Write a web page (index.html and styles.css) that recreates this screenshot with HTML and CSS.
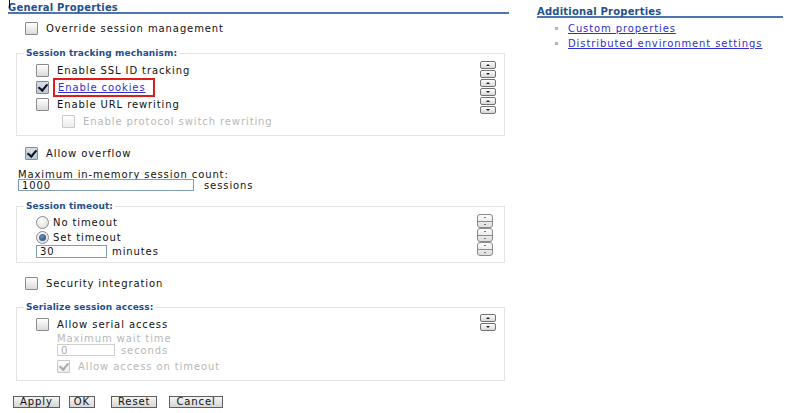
FILE: index.html
```html
<!DOCTYPE html>
<html lang="en">
<head>
    <meta charset="UTF-8">
    <title>Session management</title>
    <link rel="stylesheet" href="styles.css">
</head>
<body>
    <span class="cursor"></span>
    <div class="page">
        <div class="main">
            <h2 class="section-title">General Properties</h2>

            <div class="check-row top-row">
                <span class="cb"></span>
                <span>Override session management</span>
            </div>

            <fieldset class="group tracking">
                <legend>Session tracking mechanism:</legend>
                <div class="group-body">
                    <div class="options">
                        <div class="check-row"><span class="cb"></span><span>Enable SSL ID tracking</span></div>
                        <div class="check-row"><span class="cb checked"></span><span class="marked"><a href="#">Enable cookies</a></span></div>
                        <div class="check-row"><span class="cb"></span><span>Enable URL rewriting</span></div>
                        <div class="check-row sub disabled"><span class="cb"></span><span>Enable protocol switch rewriting</span></div>
                    </div>
                    <div class="spinners">
                        <span class="spin up"></span>
                        <span class="spin down"></span>
                        <span class="spin up"></span>
                        <span class="spin down"></span>
                        <span class="spin up"></span>
                        <span class="spin down"></span>
                    </div>
                </div>
            </fieldset>

            <div class="check-row overflow-row">
                <span class="cb checked"></span>
                <span>Allow overflow</span>
            </div>

            <label class="field-label" for="maxCount">Maximum in-memory session count:</label>
            <div class="input-row count-row">
                <input type="text" id="maxCount" class="count-input" value="1000">
                <span>sessions</span>
            </div>

            <fieldset class="group timeout">
                <legend>Session timeout:</legend>
                <div class="group-body">
                    <div class="options">
                        <div class="radio-row"><span class="rb"></span><span>No timeout</span></div>
                        <div class="radio-row"><span class="rb selected"></span><span>Set timeout</span></div>
                        <div class="input-row minutes-row">
                            <input type="text" class="minutes-input" value="30">
                            <span>minutes</span>
                        </div>
                    </div>
                    <div class="spinners pairs">
                        <span class="pair"><span class="half"></span><span class="half"></span></span>
                        <span class="pair"><span class="half"></span><span class="half"></span></span>
                        <span class="pair"><span class="half"></span><span class="half"></span></span>
                    </div>
                </div>
            </fieldset>

            <div class="check-row security-row">
                <span class="cb"></span>
                <span>Security integration</span>
            </div>

            <fieldset class="group serial">
                <legend>Serialize session access:</legend>
                <div class="group-body">
                    <div class="options">
                        <div class="check-row"><span class="cb"></span><span>Allow serial access</span></div>
                        <div class="wait disabled">
                            <div class="wait-label">Maximum wait time</div>
                            <div class="input-row">
                                <input type="text" class="wait-input" value="0" disabled>
                                <span>seconds</span>
                            </div>
                            <div class="check-row"><span class="cb checked"></span><span>Allow access on timeout</span></div>
                        </div>
                    </div>
                    <div class="spinners">
                        <span class="spin up"></span>
                        <span class="spin down"></span>
                    </div>
                </div>
            </fieldset>

            <div class="actions">
                <button>Apply</button>
                <button class="narrow">OK</button>
                <button class="reset">Reset</button>
                <button>Cancel</button>
            </div>
        </div>

        <div class="side">
            <h2 class="section-title">Additional Properties</h2>
            <ul class="links">
                <li><a href="#">Custom properties</a></li>
                <li><a href="#">Distributed environment settings</a></li>
            </ul>
        </div>
    </div>
</body>
</html>
```

FILE: styles.css
```css
body {
    margin: 0;
    font-family: 'DejaVu Sans', Verdana, sans-serif;
    font-size: 10px;
    letter-spacing: 0.9px;
    color: #111;
    background: white;
}
.cursor {
    position: absolute;
    left: 9px;
    top: 0;
    width: 1px;
    height: 8px;
    background: #000;
}
.page {
    display: flex;
    gap: 28px;
    padding-left: 8px;
}
.main {
    width: 501px;
}
.side {
    width: 246px;
}
.section-title {
    margin: 0;
    padding-top: 3px;
    font-size: 10px;
    line-height: 9px;
    letter-spacing: 0.2px;
    color: #26508e;
    border-bottom: 2px solid #4d76ae;
}
.side .section-title {
    padding-top: 8px;
    line-height: 8px;
}

/* rows */
.check-row, .radio-row {
    display: flex;
    align-items: center;
    height: 17px;
}
.cb {
    box-sizing: border-box;
    width: 13px;
    height: 13px;
    margin-right: 8px;
    border: 1px solid #8b8b8b;
    border-radius: 1px;
    background: linear-gradient(#ffffff, #dadada);
    position: relative;
}
.cb.checked {
    background: linear-gradient(#d6dfea, #b9c7d8);
}
.cb.checked::after {
    content: '';
    position: absolute;
    left: 3px;
    top: 0px;
    width: 4px;
    height: 7px;
    border: solid #111;
    border-width: 0 2px 2px 0;
    transform: rotate(40deg);
}
.disabled {
    color: #b8b8b8;
}
.disabled .cb {
    border-color: #c9c9c9;
    background: linear-gradient(#ffffff, #ececec);
}
.disabled .cb.checked::after {
    border-color: #a9a9a9;
}
.top-row {
    margin-top: 6px;
    padding-left: 17px;
}

/* fieldsets */
.group {
    margin: 0 4px 0 8px;
    padding: 0;
    border: 1px solid #e4e4e4;
}
.group legend {
    margin-left: 7px;
    padding: 0 2px;
    font-size: 9px;
    font-weight: bold;
    line-height: 12px;
    letter-spacing: 0.1px;
    color: #1f4f8c;
}
.group-body {
    display: flex;
    justify-content: space-between;
    align-items: flex-start;
}
.options {
    padding-left: 19px;
}
.tracking {
    margin-top: 10px;
}
.tracking .options {
    padding-top: 3px;
    padding-bottom: 5px;
}
.check-row.sub {
    padding-left: 26px;
}
.marked {
    padding: 0 5px 0 1px;
    outline: 2px solid #e01b1b;
    outline-offset: 2px;
}
a {
    color: #2f2fd0;
}

/* spinners */
.spinners {
    display: flex;
    flex-direction: column;
    gap: 1px;
    margin: 2px 8px 0 0;
}
.spin {
    box-sizing: border-box;
    width: 16px;
    height: 8px;
    border: 1px solid #727272;
    border-radius: 2px;
    background: linear-gradient(#fdfdfd, #d9d9d9);
    position: relative;
}
.spin::after {
    content: '';
    position: absolute;
    left: 5px;
    border-left: 2px solid transparent;
    border-right: 2px solid transparent;
}
.spin.up::after {
    top: 2px;
    border-bottom: 2px solid #222;
}
.spin.down::after {
    top: 2px;
    border-top: 2px solid #222;
}
.pairs {
    gap: 0;
    margin: 2px 11px 0 0;
}
.pair {
    box-sizing: border-box;
    display: flex;
    flex-direction: column;
    width: 16px;
    height: 14px;
    border: 1px solid #8a8a8a;
    border-radius: 3px;
    background: linear-gradient(#fbfbfb, #dedede);
}
.half {
    flex: 1;
    position: relative;
}
.half + .half {
    border-top: 1px solid #8a8a8a;
}
.half::after {
    content: '';
    position: absolute;
    left: 6px;
    top: 2px;
    width: 2px;
    height: 1px;
    background: #777;
}

/* overflow + count */
.overflow-row {
    margin-top: 9px;
    padding-left: 17px;
}
.field-label {
    display: block;
    margin-top: 8px;
    padding-left: 10px;
    line-height: 9px;
}
.input-row {
    display: flex;
    align-items: center;
    gap: 10px;
}
input {
    box-sizing: border-box;
    margin: 0;
    padding: 0 3px;
    font-family: inherit;
    font-size: 10px;
    letter-spacing: 0.9px;
    color: #111;
    border: 1px solid #7f9db9;
    background: white;
}
.count-row {
    padding-left: 10px;
}
.count-input {
    width: 176px;
    height: 12px;
}

/* timeout */
.timeout {
    margin-top: 9px;
}
.timeout .options {
    padding-top: 3px;
    padding-bottom: 4px;
    padding-left: 19px;
}
.radio-row {
    height: 15px;
}
.rb {
    box-sizing: border-box;
    width: 13px;
    height: 13px;
    margin-right: 4px;
    border: 1px solid #8b8b8b;
    border-radius: 50%;
    background: radial-gradient(circle at 40% 35%, #ffffff, #d8d8d8);
    position: relative;
}
.rb.selected::after {
    content: '';
    position: absolute;
    left: 2px;
    top: 2px;
    width: 7px;
    height: 7px;
    border-radius: 50%;
    background: radial-gradient(circle at 40% 35%, #6b8fc0, #1f3f6e);
}
.minutes-row {
    gap: 5px;
}
.minutes-input {
    width: 71px;
    height: 13px;
}

/* security */
.security-row {
    margin-top: 12px;
    padding-left: 17px;
}

/* serialize */
.serial {
    margin-top: 9px;
}
.serial .options {
    padding-top: 3px;
    padding-bottom: 5px;
}
.wait {
    padding-left: 21px;
}
.wait-label {
    line-height: 11px;
}
.wait .input-row {
    gap: 6px;
}
.wait-input {
    width: 58px;
    height: 12px;
    color: #aaa;
    border-color: #cfcfcf;
}
.wait .check-row {
    margin-top: 2px;
}
.serial .spinners {
    margin-top: 1px;
}

/* buttons */
.actions {
    display: flex;
    gap: 9px;
    margin-top: 15px;
    padding-left: 5px;
}
button {
    font-family: inherit;
    font-size: 10px;
    letter-spacing: 0.9px;
    line-height: 10px;
    height: 12px;
    padding: 0 6px;
    color: #111;
    border: 1px solid #5f5f5f;
    border-radius: 0;
    background: linear-gradient(#f4f4f4, #d6d6d6);
}
button.narrow {
    padding: 0 4px;
    margin-right: 7px;
}
button.reset {
    margin-right: 3px;
}

/* right column */
.links {
    list-style: none;
    margin: 3px 0 0;
    padding-left: 31px;
}
.links li {
    line-height: 15px;
}
.links li::before {
    content: '';
    display: inline-block;
    width: 3px;
    height: 3px;
    margin: 0 10px 2px -13px;
    background: #b5b5b5;
}
```
